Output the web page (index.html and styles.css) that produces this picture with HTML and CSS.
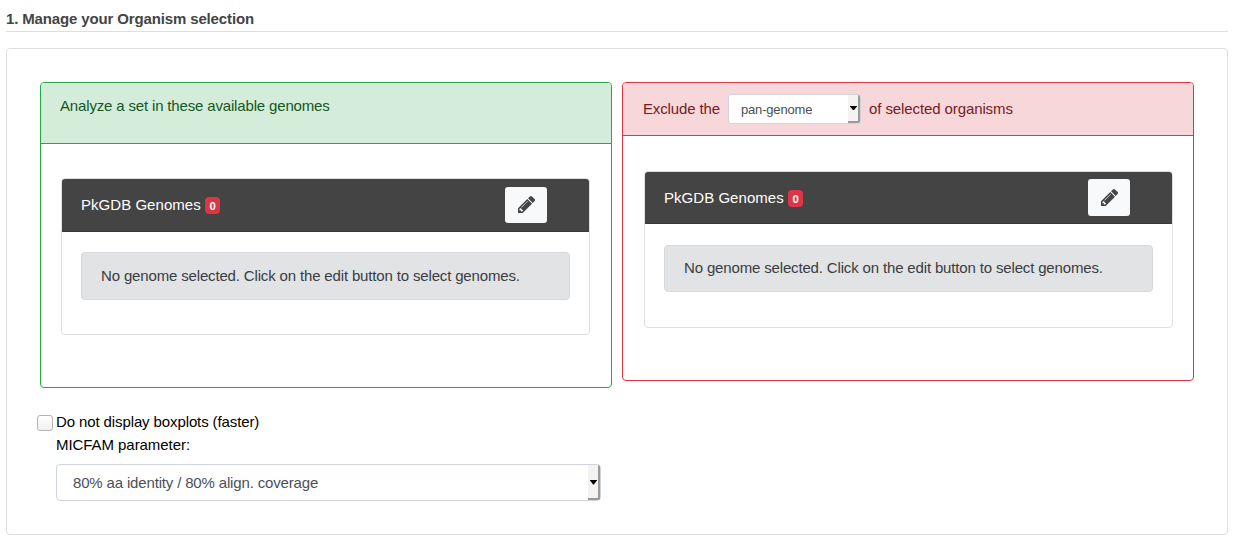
FILE: index.html
```html
<!DOCTYPE html>
<html lang="en">
<head>
<meta charset="utf-8">
<title>Organism selection</title>
<link rel="stylesheet" href="styles.css">
</head>
<body>
<svg class="defs" width="0" height="0" aria-hidden="true">
<symbol id="pencil" viewBox="0 149 1515 1515"><path d="M363 1536l91-91-235-235-91 91v107h128v128h107zm523-928q0-22-22-22-10 0-17 7l-542 542q-7 7-7 17 0 22 22 22 10 0 17-7l542-542q7-7 7-17zm-54-192l416 416-832 832H0v-416zm683 96q0 53-37 90l-166 166-416-416 166-165q36-38 90-38 53 0 91 38l235 234q37 39 37 91z"/></symbol>
</svg>
<h1 class="title">1. Manage your Organism selection</h1>
<main class="panel">
  <div class="sets">
    <section class="set include">
      <header class="set-head"><span class="txt">Analyze a set in these available genomes</span></header>
      <div class="set-body">
        <div class="card">
          <div class="card-head"><span class="name">PkGDB Genomes</span><span class="badge">0</span><button class="edit" aria-label="Edit"><svg class="icon"><use href="#pencil"/></svg></button></div>
          <div class="alert">No genome selected. Click on the edit button to select genomes.</div>
        </div>
      </div>
    </section>
    <section class="set exclude">
      <header class="set-head"><span class="lead">Exclude the</span><div class="select small"><span class="value">pan-genome</span><span class="arrow"></span></div><span class="tail">of selected organisms</span></header>
      <div class="set-body">
        <div class="card">
          <div class="card-head"><span class="name">PkGDB Genomes</span><span class="badge">0</span><button class="edit" aria-label="Edit"><svg class="icon"><use href="#pencil"/></svg></button></div>
          <div class="alert">No genome selected. Click on the edit button to select genomes.</div>
        </div>
      </div>
    </section>
  </div>
  <div class="options">
    <div class="check"><span class="box"></span><span>Do not display boxplots (faster)</span></div>
    <div class="label">MICFAM parameter:</div>
    <div class="select large"><span class="value">80% aa identity / 80% align. coverage</span><span class="arrow"></span></div>
  </div>
</main>
</body>
</html>
```
FILE: styles.css
```css
* { box-sizing: border-box; }
body {
  margin: 0;
  padding: 7px 13px 0 6px;
  font: 15px/23px "Liberation Sans", Arial, sans-serif;
  letter-spacing: -0.14px;
  color: #000;
  background: #fff;
}
.defs { display: block; height: 0; }
.title {
  margin: 0 0 16px;
  height: 25px;
  font-size: 15px;
  line-height: 23px;
  color: #444;
  border-bottom: 1px solid #dfdfdf;
}
.panel {
  height: 487px;
  padding: 33px;
  border: 1px solid #dfdfdf;
  border-radius: 4px;
}
.sets { display: flex; gap: 10px; height: 306px; align-items: flex-start; }
.set { width: 572px; border: 1px solid; border-radius: 4px; }
.set-head { display: flex; border-bottom: 1px solid; border-radius: 3px 3px 0 0; }
.include { height: 306px; border-color: #28a745; }
.include .set-head { height: 61px; padding: 11px 19px; color: #155724; background: #d4edda; border-color: #28a745; letter-spacing: -0.16px; }
.include .set-body { padding: 34px 21px 0 20px; }
.exclude { height: 299px; border-color: #dc3545; }
.exclude .set-head { height: 53px; padding: 0 20px; align-items: center; color: #721c24; background: #f8d7da; border-color: #dc3545; }
.exclude .set-body { padding: 35px 20px 0 21px; }
.lead { width: 77px; white-space: nowrap; margin-top: -1px; }
.tail { margin-top: -1px; letter-spacing: -0.1px; }
.card { height: 157px; border: 1px solid #dfdfdf; border-radius: 4px; }
.card-head {
  display: flex;
  align-items: center;
  height: 53px;
  padding: 0 42px 0 19px;
  color: #fff;
  background: #444;
  border-bottom: 1px solid #3b3b3b;
  border-radius: 3px 3px 0 0;
}
.exclude .card-head { height: 52px; }
.name { width: 120px; white-space: nowrap; letter-spacing: 0.04px; margin-top: -1px; }
.exclude .name { margin-top: 0; }
.badge {
  width: 15px;
  height: 17px;
  margin: 1px 0 0 4px;
  border-radius: 4px;
  font-size: 11.4px;
  font-weight: bold;
  line-height: 18px;
  text-align: center;
  background: #dc3545;
}
.edit {
  display: flex;
  align-items: center;
  justify-content: center;
  width: 42px;
  height: 36px;
  margin-left: auto;
  padding: 0;
  border: 0;
  border-radius: 3px;
  background: #f8f9fa;
}
.exclude .edit { height: 37px; }
.icon { width: 17px; height: 17px; margin-top: -1px; fill: #444; }
.alert {
  height: 48px;
  margin: 20px 19px 0;
  padding: 11px 19px;
  letter-spacing: -0.155px;
  color: #383d41;
  background: #e2e3e5;
  border: 1px solid #d6d8db;
  border-radius: 4px;
}
.exclude .alert { height: 47px; margin-top: 21px; padding-top: 10px; }
.options { padding: 22px 0 0 16px; letter-spacing: -0.11px; }
.check { display: flex; align-items: center; gap: 3px; margin-left: -19px; height: 23px; }
.label { letter-spacing: -0.06px; }
.box {
  width: 16px;
  height: 16px;
  margin-top: 2px;
  border: 1px solid #bbb3ad;
  border-radius: 3px;
  background: linear-gradient(#fff, #f0f0f0);
}
.select {
  display: flex;
  align-items: center;
  justify-content: space-between;
  color: #495057;
  background: #fff;
  border: 1px solid #ced4da;
  border-radius: 4px;
}
.arrow {
  display: flex;
  align-items: center;
  justify-content: center;
  align-self: stretch;
  width: 12px;
  background: #f4f3f2;
  border-right: 2px solid #9c9a98;
  border-bottom: 2px solid #9c9a98;
  border-radius: 0 2px 2px 0;
}
.arrow::before {
  content: "";
  flex: none;
  width: 7px;
  height: 5px;
  margin: 1px 0 0 1px;
  background: #000;
  clip-path: polygon(0 0, 100% 0, 100% 15%, 57% 100%, 43% 100%, 0 15%);
}
.small { width: 133px; height: 30px; margin: 0 8px; padding-left: 12px; font-size: 13px; border-radius: 3px; }
.small .arrow::before { height: 4px; margin-top: 0; }
.small .value { padding-top: 1px; letter-spacing: -0.18px; }
.large { width: 545px; height: 37px; margin-top: 8px; padding-left: 16px; letter-spacing: -0.16px; }
```
